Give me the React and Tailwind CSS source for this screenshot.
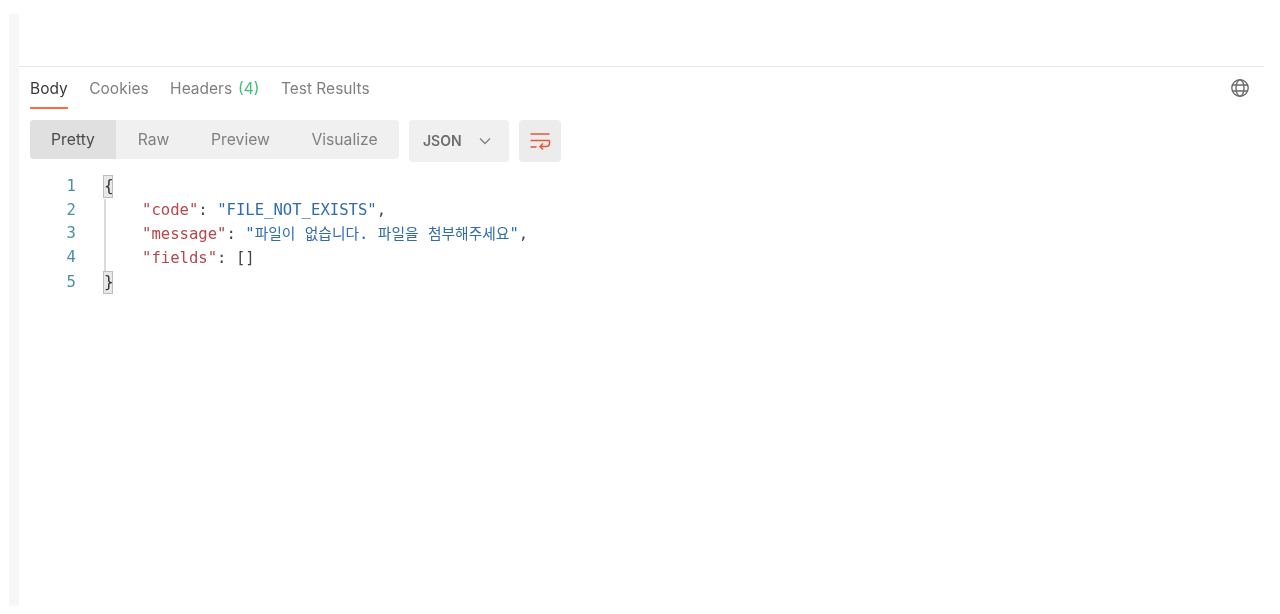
import React from "react";

const mono = "font-['DejaVu_Sans_Mono','Noto_Sans_CJK_KR',monospace]";

function Tab({ children, active }) {
  return (
    <div className={`h-[42px] pt-[1px] flex items-center relative ${active ? "text-[#3a3a3a]" : "text-[#7f7f7f]"}`}>
      {children}
      {active && <div className="absolute left-0 right-0 bottom-0 h-[2px] bg-[#ff6c37]" />}
    </div>
  );
}

function Bracket({ children }) {
  return (
    <span className="inline-block w-[10px] h-[23px] leading-[20px] text-center bg-[#e8e8e8] border border-[#bdbdbd] text-[#333] text-[16px] overflow-hidden">
      {children}
    </span>
  );
}

function Num({ n }) {
  return <div className="w-[57px] text-right text-[#4b8ea8] mr-[27px] shrink-0">{n}</div>;
}

function Ko({ children }) {
  return <span className="text-[14.75px]">{children}</span>;
}

export default function App() {
  return (
    <div className="h-[614px] w-[1280px] bg-white overflow-hidden flex pl-[9px] pt-[14px] pb-[8px] font-['Inter',sans-serif] blur-[0.6px]">
      <div className="w-[10px] bg-[#f7f7f7] shrink-0" />
      <div className="w-[1245px] flex flex-col">
        <div className="h-[53px] border-b border-[#e6e6e6] shrink-0" />
        <div className="flex items-center pl-[11px] pr-[14px] justify-between">
          <div className="flex gap-[21.5px] text-[15.5px]">
            <Tab active>Body</Tab>
            <Tab>Cookies</Tab>
            <Tab>
              Headers<span className="text-[#3fbf73] ml-[6px]">(4)</span>
            </Tab>
            <Tab>Test Results</Tab>
          </div>
          <svg width="20" height="20" viewBox="0 0 20 20" fill="none" stroke="#6b6b6b" strokeWidth="1.4">
            <circle cx="10" cy="10" r="8.2" />
            <ellipse cx="10" cy="10" rx="4" ry="8.2" />
            <path d="M2.4 7h15.2M2.4 13h15.2" />
          </svg>
        </div>
        <div className="flex items-start pl-[11px] mt-[11px] gap-[10px]">
          <div className="flex w-[369px] h-[39px] rounded-[4px] bg-[#f0f0f0] text-[15.7px] text-[#808080] items-center overflow-hidden">
            <div className="w-[86px] h-full bg-[#e0e0e0] text-[#4a4a4a] flex items-center justify-center">Pretty</div>
            <div className="w-[75px] text-center">Raw</div>
            <div className="w-[99px] text-center">Preview</div>
            <div className="flex-1 text-center">Visualize</div>
          </div>
          <div className="w-[100px] h-[42px] pb-[1px] rounded-[4px] bg-[#f0f0f0] flex items-center pl-[14px] gap-[16px] text-[14px] font-semibold text-[#6e6e6e]">
            JSON
            <svg width="14" height="14" viewBox="0 0 14 14" fill="none" stroke="#808080" strokeWidth="1.3">
              <path d="M2 4.5l5 5 5-5" />
            </svg>
          </div>
          <div className="w-[42px] h-[42px] rounded-[4px] bg-[#ececec] flex items-center justify-center">
            <svg width="22" height="20" viewBox="0 0 22 20" fill="none" stroke="#e2583a" strokeWidth="1.5">
              <path d="M1.5 3h19M1.5 9.5h19M1.5 16h6" />
              <path d="M20.5 9.5v3a3 3 0 0 1-3 3h-6M14 12.5l-3 3 3 3" />
            </svg>
          </div>
        </div>
        <div className={`mt-[13px] text-[15.6px] leading-[23.7px] ${mono}`}>
          <div className="flex">
            <Num n={1} />
            <div className="flex items-center">
              <Bracket>{"{"}</Bracket>
            </div>
          </div>
          <div className="flex">
            <div className="shrink-0">
              <Num n={2} />
              <Num n={3} />
              <Num n={4} />
            </div>
            <div className="border-l-2 border-[#dcdcdc] ml-[1px] pl-[36px] whitespace-pre">
              <div>
                <span className="text-[#b5474a]">"code"</span>
                <span className="text-[#444]">: </span>
                <span className="text-[#2f6bad]">"FILE_NOT_EXISTS"</span>
                <span className="text-[#444]">,</span>
              </div>
              <div>
                <span className="text-[#b5474a]">"message"</span>
                <span className="text-[#444]">: </span>
                <span className="text-[#2f6bad]">
                  "<Ko>파일이</Ko> <Ko>없습니다</Ko>. <Ko>파일을</Ko> <Ko>첨부해주세요</Ko>"
                </span>
                <span className="text-[#444]">,</span>
              </div>
              <div>
                <span className="text-[#b5474a]">"fields"</span>
                <span className="text-[#444]">: []</span>
              </div>
            </div>
          </div>
          <div className="flex">
            <Num n={5} />
            <div className="flex items-center">
              <Bracket>{"}"}</Bracket>
            </div>
          </div>
        </div>
      </div>
    </div>
  );
}
